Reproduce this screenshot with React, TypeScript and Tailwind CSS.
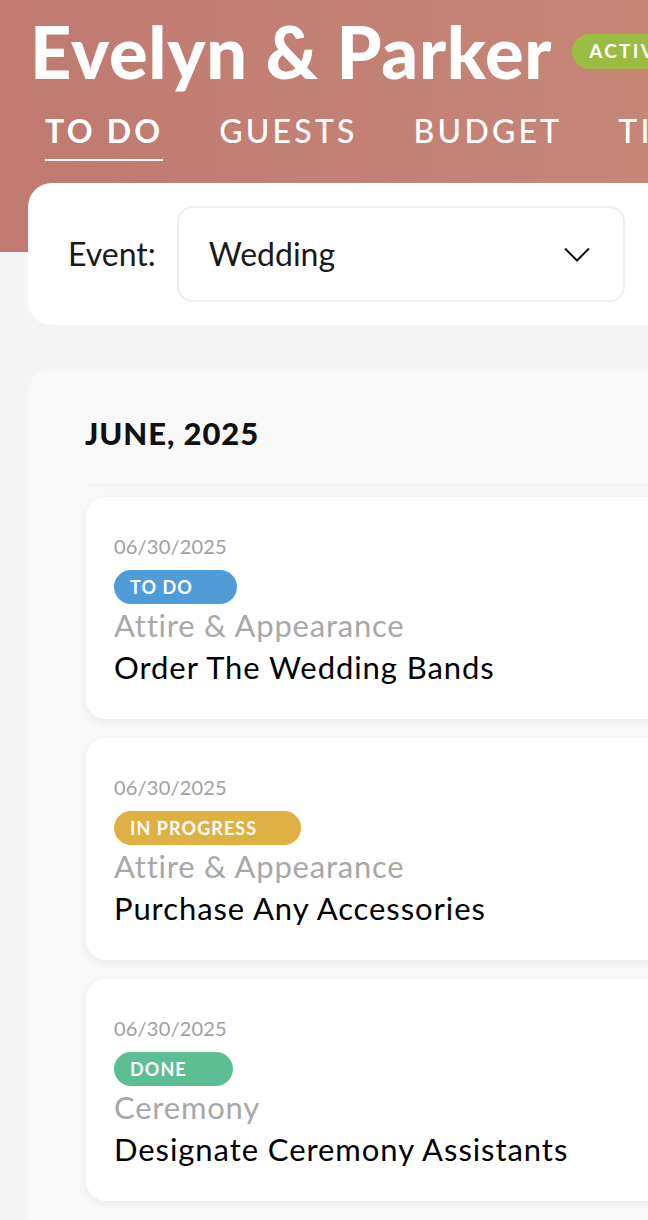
import React from "react";

type Task = {
  date: string;
  status: "todo" | "progress" | "done";
  category: string;
  title: string;
};

const tasks: Task[] = [
  { date: "06/30/2025", status: "todo", category: "Attire & Appearance", title: "Order The Wedding Bands" },
  { date: "06/30/2025", status: "progress", category: "Attire & Appearance", title: "Purchase Any Accessories" },
  { date: "06/30/2025", status: "done", category: "Ceremony", title: "Designate Ceremony Assistants" },
];

const badgeStyles = {
  todo: { label: "TO DO", className: "bg-[#509cd9]" },
  progress: { label: "IN PROGRESS", className: "bg-[#dfb043]" },
  done: { label: "DONE", className: "bg-[#5bbf93]" },
};

function StatusBadge({ status }: { status: Task["status"] }) {
  const b = badgeStyles[status];
  return (
    <span
      className={`inline-flex items-center h-[34px] min-w-[119px] rounded-full pl-[16px] pr-[44px] text-white text-[18px] font-bold tracking-[0.06em] leading-none ${b.className}`}
    >
      {b.label}
    </span>
  );
}

function TaskCard({ task }: { task: Task }) {
  return (
    <div className="h-[222px] bg-white rounded-[20px] shadow-[0_3px_10px_rgba(0,0,0,0.06)] pl-[28px] pt-[37px]">
      <div className="text-[20px] leading-[24px] text-[#a0a0a0] tracking-[0.01em]">{task.date}</div>
      <div className="mt-[12px] h-[34px]">
        <StatusBadge status={task.status} />
      </div>
      <div className="text-[31px] leading-[42px] text-[#a8a8a8] tracking-[0.025em]">{task.category}</div>
      <div className="text-[31px] leading-[42px] text-black tracking-[0.03em]">{task.title}</div>
    </div>
  );
}

export default function App() {
  return (
    <div className="w-[648px] h-[1220px] overflow-hidden bg-[#f4f4f4] font-['Lato','Liberation_Sans',sans-serif]">
      <div className="w-[1100px]">
        {/* header */}
        <div className="h-[252px] bg-gradient-to-r from-[#c07a70] to-[#c98f7c] pl-[30px] pt-[13px]">
          <div className="flex items-center gap-[20px]">
            <h1 className="text-[72px] leading-[76px] font-black text-white tracking-[0.01em]">
              Evelyn &amp; Parker
            </h1>
            <span className="h-[35px] rounded-full bg-[#9cbb41] px-[17px] flex items-center text-white text-[19px] font-bold tracking-[0.12em]">
              ACTIVE
            </span>
          </div>
          <nav className="flex gap-[56px] pl-[15px] mt-[26px] text-white text-[32px] tracking-[0.1em] leading-none">
            <div className="flex flex-col">
              <span className="font-bold">TO DO</span>
              <span className="mt-[12px] h-[2px] bg-white" />
            </div>
            <span className="font-medium">GUESTS</span>
            <span className="font-medium">BUDGET</span>
            <span className="font-medium">TIMELINE</span>
          </nav>
        </div>

        {/* event selector */}
        <div className="-mt-[69px] ml-[28px] h-[142px] bg-white rounded-[24px] flex items-center pl-[40px]">
          <span className="text-[32px] text-[#1a1a1a]">Event:</span>
          <div className="ml-[21px] w-[448px] h-[96px] border-2 border-[#eeeeee] rounded-[16px] flex items-center justify-between pl-[30px] pr-[33px]">
            <span className="text-[32px] text-[#1a1a1a]">Wedding</span>
            <svg width="26" height="15" viewBox="0 0 26 15" fill="none" stroke="#111" strokeWidth="2">
              <path d="M1 1.5l12 12 12-12" />
            </svg>
          </div>
        </div>

        {/* month section */}
        <div className="mt-[44px] ml-[28px] bg-[#f8f8f8] rounded-tl-[24px] pb-[40px]">
          <div className="ml-[57px] pt-[46px] pb-[33px] shadow-[0_5px_6px_-5px_rgba(0,0,0,0.07)]">
            <h2 className="text-[31px] leading-[36px] font-black tracking-[0.03em] text-[#111]">JUNE, 2025</h2>
          </div>
          <div className="flex flex-col gap-[19px] pl-[58px] pt-[13px]">
            {tasks.map((t, i) => (
              <TaskCard key={i} task={t} />
            ))}
          </div>
        </div>
      </div>
    </div>
  );
}
